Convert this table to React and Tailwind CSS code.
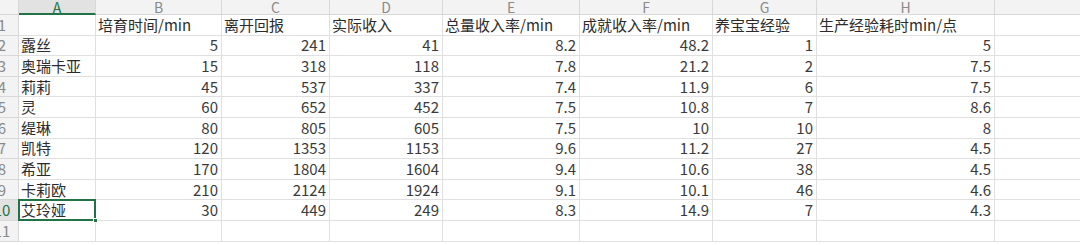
import React from "react";

const cols = [
  { l: "A", w: "w-[77px]" },
  { l: "B", w: "w-[126px]" },
  { l: "C", w: "w-[108px]" },
  { l: "D", w: "w-[113px]" },
  { l: "E", w: "w-[137px]" },
  { l: "F", w: "w-[133px]" },
  { l: "G", w: "w-[104px]" },
  { l: "H", w: "w-[178px]" },
  { l: "I", w: "w-[200px]" },
];

const rows = [
  ["", "培育时间/min", "离开回报", "实际收入", "总量收入率/min", "成就收入率/min", "养宝宝经验", "生产经验耗时min/点", ""],
  ["露丝", 5, 241, 41, 8.2, 48.2, 1, 5, ""],
  ["奥瑞卡亚", 15, 318, 118, 7.8, 21.2, 2, 7.5, ""],
  ["莉莉", 45, 537, 337, 7.4, 11.9, 6, 7.5, ""],
  ["灵", 60, 652, 452, 7.5, 10.8, 7, 8.6, ""],
  ["缇琳", 80, 805, 605, 7.5, 10, 10, 8, ""],
  ["凯特", 120, 1353, 1153, 9.6, 11.2, 27, 4.5, ""],
  ["希亚", 170, 1804, 1604, 9.4, 10.6, 38, 4.5, ""],
  ["卡莉欧", 210, 2124, 1924, 9.1, 10.1, 46, 4.6, ""],
  ["艾玲娅", 30, 449, 249, 8.3, 14.9, 7, 4.3, ""],
  ["", "", "", "", "", "", "", "", ""],
];

const font = { fontFamily: '"Noto Sans CJK SC", "Liberation Sans", sans-serif' };

export default function App() {
  return (
    <div className="w-[1080px] h-[245px] overflow-hidden bg-white text-[#2b2b2b]" style={font}>
      {/* header row */}
      <div className="flex h-[15px]">
        <div className="w-[19px] shrink-0 bg-[#f3f3f3] border-r border-b border-[#d8d8d8]" />
        {cols.map((c, i) => (
          <div
            key={c.l}
            className={
              i === 0
                ? `${c.w} shrink-0 flex items-start justify-center bg-[#e2e2e2] border-r border-[#d8d8d8] border-b-2 border-b-[#217346] text-[#217346] text-[14px] leading-[14px]`
                : `${c.w} shrink-0 flex items-start justify-center bg-[#f3f3f3] border-r border-b border-[#d8d8d8] text-[#8a8a8a] text-[14px] leading-[14px]`
            }
          >
            {c.l}
          </div>
        ))}
      </div>
      {rows.map((r, ri) => (
        <div key={ri} className="flex h-[20.6px]">
          <div
            className={
              ri === 9
                ? "w-[19px] shrink-0 overflow-hidden bg-[#e2e2e2] border-r border-b border-[#d8d8d8] flex items-center"
                : "w-[19px] shrink-0 overflow-hidden bg-[#f3f3f3] border-r border-b border-[#d8d8d8] flex items-center"
            }
          >
            <div
              className={
                ri === 9
                  ? "w-[30px] ml-[-13px] shrink-0 text-center text-[15px] leading-[18px] text-[#217346]"
                  : "w-[30px] ml-[-13px] shrink-0 text-center text-[15px] leading-[18px] text-[#8a8a8a]"
              }
            >
              {ri + 1}
            </div>
          </div>
          {cols.map((c, ci) => {
            const v = r[ci];
            const isNum = typeof v === "number";
            const selected = ri === 9 && ci === 0;
            return (
              <div
                key={ci}
                className={
                  selected
                    ? `${c.w} shrink-0 relative border-r border-b border-[#e0e0e0] flex items-center`
                    : `${c.w} shrink-0 border-r border-b border-[#e0e0e0] flex items-center ${isNum ? "justify-end pr-[3px] text-[#3a3a3a]" : "pl-[2px]"}`
                }
              >
                {selected ? (
                  <>
                    <div className="absolute left-[-1px] top-[-1px] right-[-1px] bottom-[-1px] border-2 border-[#217346] pointer-events-none" />
                    <div className="absolute right-[-3px] bottom-[-3px] w-[5px] h-[5px] bg-[#217346] border border-white" />
                    <span className="pl-[2px] text-[15px] leading-[18px] whitespace-nowrap">{v}</span>
                  </>
                ) : (
                  <span className="text-[15px] leading-[18px] whitespace-nowrap">{v}</span>
                )}
              </div>
            );
          })}
        </div>
      ))}
    </div>
  );
}
